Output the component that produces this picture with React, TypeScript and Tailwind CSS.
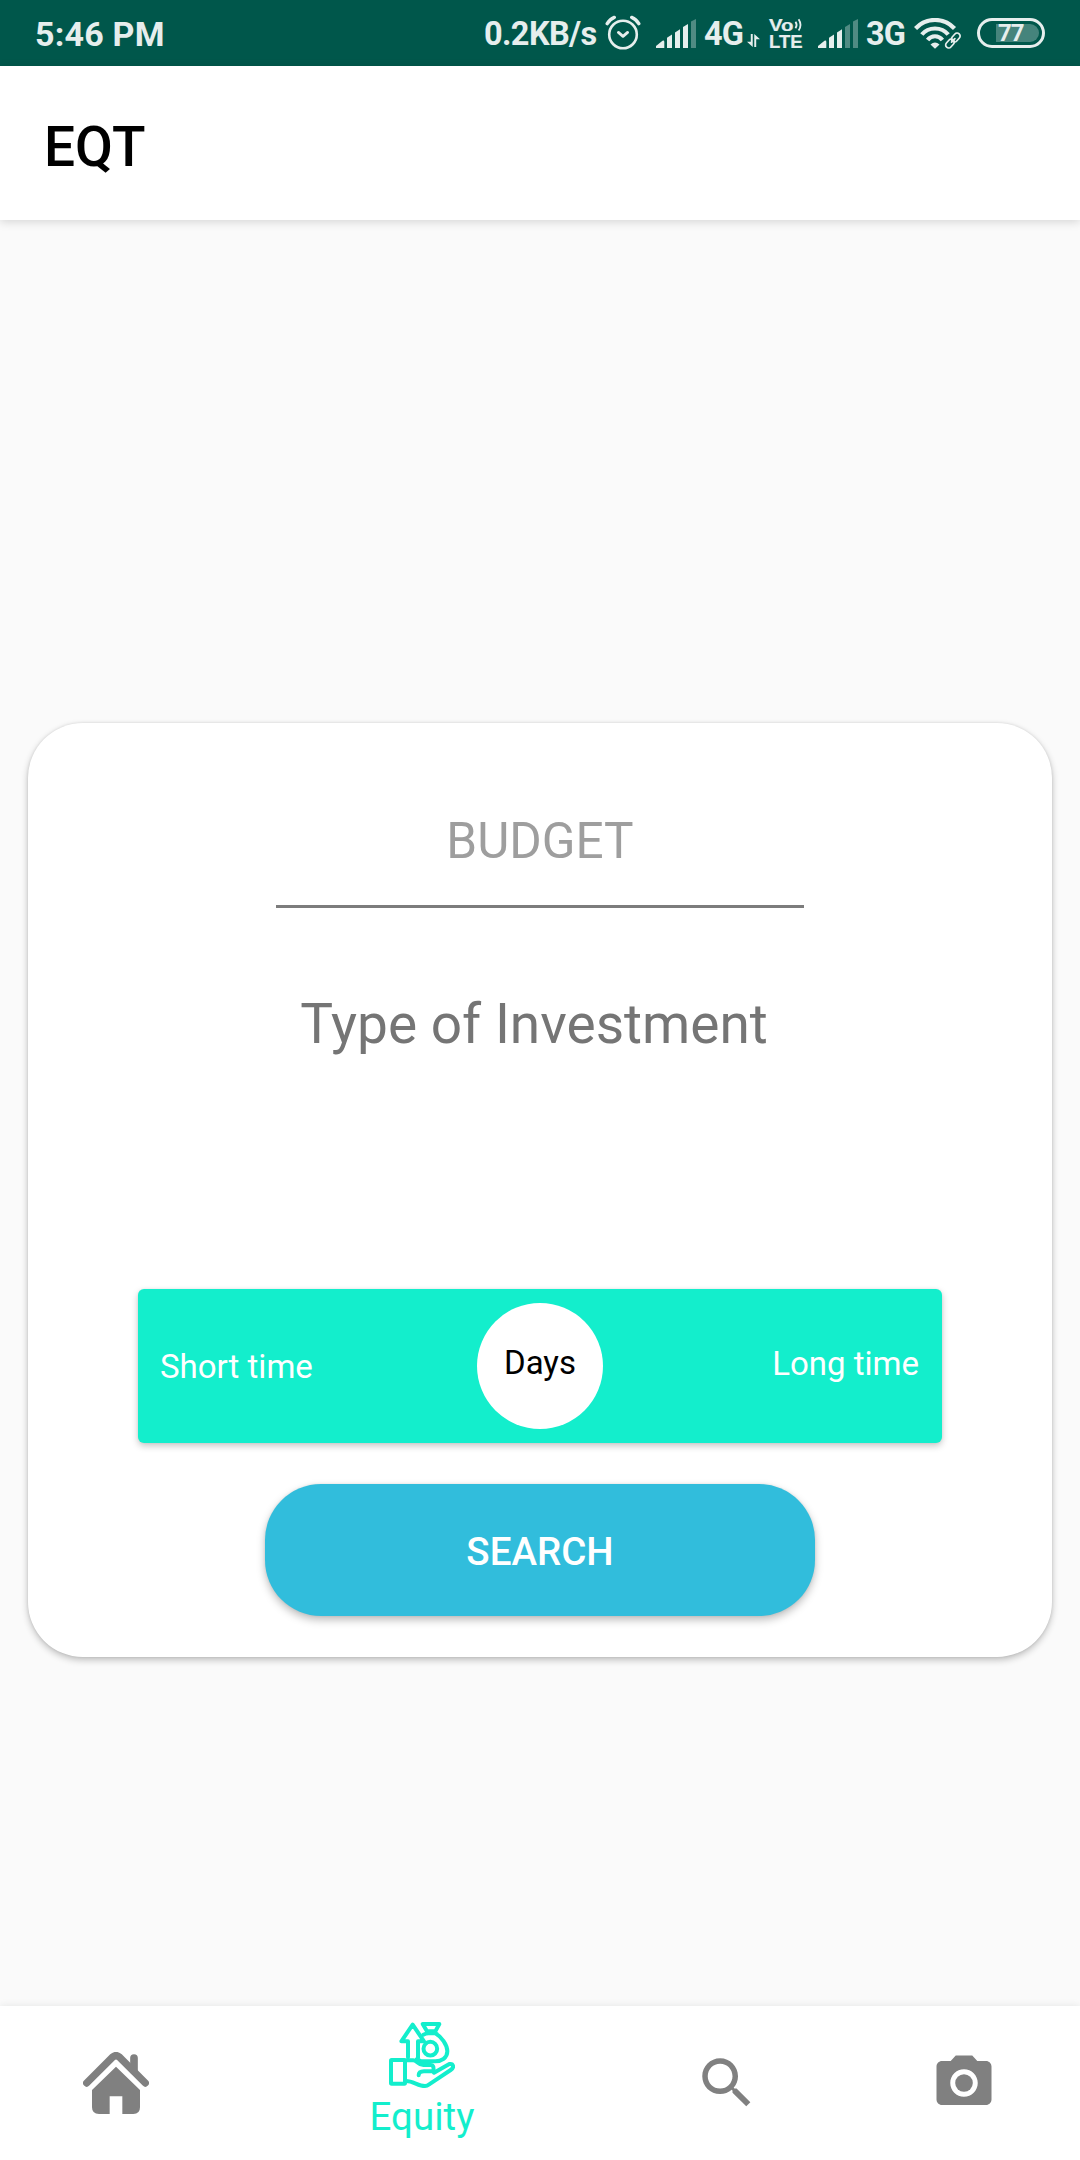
import React from "react";

function AlarmIcon() {
  return (
    <svg className="ml-[7px] h-[36px] w-[36px] shrink-0" viewBox="0 0 36 36" fill="none" stroke="#e6eeed" strokeLinecap="round">
      <circle cx="18" cy="19.5" r="13.8" strokeWidth="2.6" />
      <path d="M13.4 17.4 18 21.4l4.6-4" strokeWidth="2.8" strokeLinejoin="round" />
      <path d="M2.2 8.6C4 5.6 6.300 3.600 9.300 2.400M26.700 2.400C29.700 3.600 32 5.600 33.800 8.600" strokeWidth="3.4" />
    </svg>
  );
}

function SignalIcon({ level, className }: { level: number; className: string }) {
  const bars = [
    "M0 29v-2L6.500 21.800Q8.300 21 8.300 22.800V29z",
    "M11 29V18.800L16 15.600V29z",
    "M19 29V13.500L24 10.300V29z",
    "M27 29V8L32 5V29z",
    "M35 29V2.500L40 0V29z",
  ];
  return (
    <svg className={className} viewBox="0 0 40 29" fill="#e6eeed">
      {bars.map((d, i) => (
        <path key={d} d={d} opacity={i < level ? 1 : 0.35} />
      ))}
    </svg>
  );
}

function DataArrows() {
  return (
    <svg className="ml-[3px] mt-[14px] h-[13px] w-[13px] shrink-0" viewBox="0 0 12 12" fill="#e6eeed">
      <path d="M3.500 0H5.300V12L0 7.200H3.500zM8.500 12H6.700V0L12 4.800H8.500z" />
    </svg>
  );
}

function VolteIcon() {
  return (
    <svg className="ml-[8px] h-[38px] w-[36px] shrink-0 overflow-visible font-['Liberation_Sans']" viewBox="-1 -4 36 38" fill="#e6eeed" stroke="#e6eeed" strokeWidth="0.2">
      <text x="0" y="12.700" fontSize="17" fontWeight="700" textLength="24.500" lengthAdjust="spacingAndGlyphs">Vo</text>
      <text x="0" y="29.800" fontSize="18" fontWeight="700" textLength="33.500" lengthAdjust="spacingAndGlyphs">LTE</text>
      <path d="M26.500 3.800q2.200 3.200 0 6.400M29.600 1.200q3.800 5.600 0 11.400" fill="none" strokeWidth="1.800" />
    </svg>
  );
}

function WifiLinkIcon() {
  return (
    <svg className="ml-[9px] h-[31px] w-[48px] shrink-0" viewBox="0 0 48 31" fill="none" stroke="#e6eeed">
      <path d="M1.500 10.500C12-.9 30-.9 40.500 10.500M7.800 16.500C14.500 8.500 27.500 8.500 34.200 16.500M13.600 22C17.500 17 24.500 17 28.400 22" strokeWidth="4.200" />
      <path d="M16.500 26.500Q21 22.500 25.500 26.500L21 30.800z" fill="#e6eeed" stroke="none" />
      <g strokeWidth="1.700" strokeLinecap="round">
        <rect x="-5" y="-3" width="10" height="6" rx="3" transform="translate(41.800 19.500) rotate(-48)" />
        <rect x="-5" y="-3" width="10" height="6" rx="3" transform="translate(36 25.500) rotate(-48)" />
        <path d="M37.500 24.200l3.400-3.500" />
      </g>
    </svg>
  );
}

function Battery() {
  return (
    <div className="relative ml-[15px] mr-[35px] flex h-[30px] w-[68px] shrink-0 items-center rounded-full border-3 border-[#e6eeed] pl-[16px]">
      <div className="flex h-[18px] w-[43px] items-center rounded-r-full bg-[#e6eeed]/30 pl-[2px]">
        <span className="text-[24px] leading-none font-bold tracking-[-1px] text-[#e6eeed]">77</span>
      </div>
    </div>
  );
}

function StatusBar() {
  return (
    <div className="flex h-[66px] shrink-0 items-center bg-[#00574b] whitespace-nowrap text-[#e6eeed]">
      <span className="ml-[35px] w-[132px] pt-[2px] text-[34px] leading-none font-bold tracking-[0.2px]">5:46 PM</span>
      <div className="ml-auto flex h-full items-center">
        <span className="w-[114px] pt-[2px] text-[32.5px] leading-none font-bold tracking-[-0.6px]">0.2KB/s</span>
        <AlarmIcon />
        <SignalIcon level={4} className="ml-[15px] h-[29px] w-[40px] shrink-0" />
        <span className="ml-[8px] w-[40px] pt-[2px] text-[32.5px] leading-none font-bold tracking-[-0.8px]">4G</span>
        <DataArrows />
        <VolteIcon />
        <SignalIcon level={3} className="ml-[14px] h-[29px] w-[40px] shrink-0" />
        <span className="ml-[8px] w-[39px] pt-[2px] text-[32.5px] leading-none font-bold tracking-[-0.8px]">3G</span>
        <WifiLinkIcon />
        <Battery />
      </div>
    </div>
  );
}

function HomeIcon() {
  return (
    <svg className="h-[62px] w-[66px]" viewBox="69 66 198 186" fill="#808080">
      <path d="M80 159 157 82Q168 72 179 82L256 159" fill="none" stroke="#808080" strokeWidth="22" strokeLinecap="round" strokeLinejoin="round" />
      <path d="M222 84v38" stroke="#808080" strokeWidth="23" strokeLinecap="round" />
      <path d="M168 110 240 180V232Q240 252 220 252H187V199H149V252H117Q96 252 96 232V180z" />
    </svg>
  );
}

function EquityIcon() {
  return (
    <svg className="h-[66px] w-[66px]" viewBox="87 66 198 198" fill="none" stroke="#13eecc" strokeWidth="12" strokeLinejoin="round" strokeLinecap="round">
      <rect x="93" y="180" width="42" height="71" rx="2" />
      <path d="M144 172V124H124L158 74 192 124H174V174" />
      <path d="M188 72H238L226 94H201z" />
      <path d="M190 104Q198 100 206 100H226C244 110 262 134 262 154C262 174 244 184 226 184H184Q178 180 170 178" />
      <circle cx="211" cy="146" r="20.500" />
      <path d="M140 181H160C172 181 174 195 190 195H212C220 195 224 205 218 214H192C180 214 176 220 176 226" />
      <path d="M138 243C160 243 174 258 195 258C202 258 206 254 212 250L272 210C284 202 280 190 268 192L222 218" />
    </svg>
  );
}

function SearchIcon() {
  return (
    <svg className="h-[66px] w-[66px]" viewBox="0 0 24 24" fill="#808080">
      <path d="M15.500 14h-.79l-.28-.27C15.410 12.590 16 11.110 16 9.500 16 5.910 13.090 3 9.500 3S3 5.910 3 9.500 5.910 16 9.500 16c1.610 0 3.090-.59 4.230-1.570l.27.28v.79l5 4.990L20.490 19l-4.990-5zm-6 0C7.010 14 5 11.990 5 9.500S7.010 5 9.500 5 14 7.010 14 9.500 11.990 14 9.500 14z" />
    </svg>
  );
}

function CameraIcon() {
  return (
    <svg className="h-[66px] w-[66px]" viewBox="0 0 24 24" fill="#808080">
      <circle cx="12" cy="12" r="3.200" />
      <path d="M9 2 7.170 4H4c-1.100 0-2 .9-2 2v12c0 1.100.9 2 2 2h16c1.100 0 2-.9 2-2V6c0-1.100-.9-2-2-2h-3.170L15 2H9zm3 15c-2.760 0-5-2.240-5-5s2.240-5 5-5 5 2.240 5 5-2.240 5-5 5z" />
    </svg>
  );
}

function BottomNav() {
  return (
    <nav className="grid h-[154px] shrink-0 grid-cols-[232px_380px_230px_1fr] justify-items-center bg-white shadow-[0_0_8px_rgba(0,0,0,0.09)]">
      <button className="self-start pt-[46px]"><HomeIcon /></button>
      <button className="flex flex-col items-center self-start pt-[16px] text-[#13eecc]">
        <EquityIcon />
        <span className="mt-[6px] text-[38.5px] leading-[46px]">Equity</span>
      </button>
      <button className="self-start pt-[44px]"><SearchIcon /></button>
      <button className="self-start pt-[44px] pl-[5px]"><CameraIcon /></button>
    </nav>
  );
}

function SearchCard() {
  return (
    <section className="mx-[28px] mt-[503px] flex h-[934px] flex-col items-center rounded-[55px] bg-white shadow-[0_3px_7px_rgba(0,0,0,0.24),0_0_3px_rgba(0,0,0,0.1)]">
      <input
        className="mt-[85px] h-[100px] w-[528px] border-b-3 border-[#7c7c7c] bg-transparent pb-[31px] text-center text-[49.5px] leading-[66px] outline-none placeholder:text-[#9e9e9e] placeholder:opacity-100"
        placeholder="BUDGET"
      />
      <h2 className="mt-[84px] mr-[12px] text-[55px] leading-[64px] text-[#757575]">Type of Investment</h2>
      <div className="mt-[233px] grid h-[154px] w-[804px] grid-cols-[1fr_126px_1fr] items-center rounded-[6px] bg-[#13eecc] pr-[23px] pl-[23px] text-[33px] leading-[40px] text-white shadow-[0_3px_7px_rgba(0,0,0,0.22),0_0_3px_rgba(0,0,0,0.06)]">
        <span className="-ml-px pt-px">Short time</span>
        <div className="flex h-[126px] items-center justify-center rounded-full bg-white pb-[6px] text-black">Days</div>
        <span className="pb-[4px] text-right">Long time</span>
      </div>
      <button className="mt-[41px] h-[132px] w-[550px] rounded-[56px] bg-[#31bddc] pt-[4px] text-[38.5px] leading-none font-medium text-white shadow-[0_4px_8px_rgba(0,0,0,0.26),0_0_3px_rgba(0,0,0,0.08)]">
        SEARCH
      </button>
    </section>
  );
}

export default function App() {
  return (
    <div className="flex h-[2160px] w-[1080px] flex-col overflow-hidden bg-[#fafafa] font-['Roboto',sans-serif]">
      <StatusBar />
      <header className="flex h-[154px] shrink-0 items-center bg-white pt-[8px] pl-[44px] shadow-[0_2px_9px_rgba(0,0,0,0.15)]">
        <h1 className="text-[55px] leading-none font-medium text-black">EQT</h1>
      </header>
      <main className="min-h-0 flex-1">
        <SearchCard />
      </main>
      <BottomNav />
    </div>
  );
}
